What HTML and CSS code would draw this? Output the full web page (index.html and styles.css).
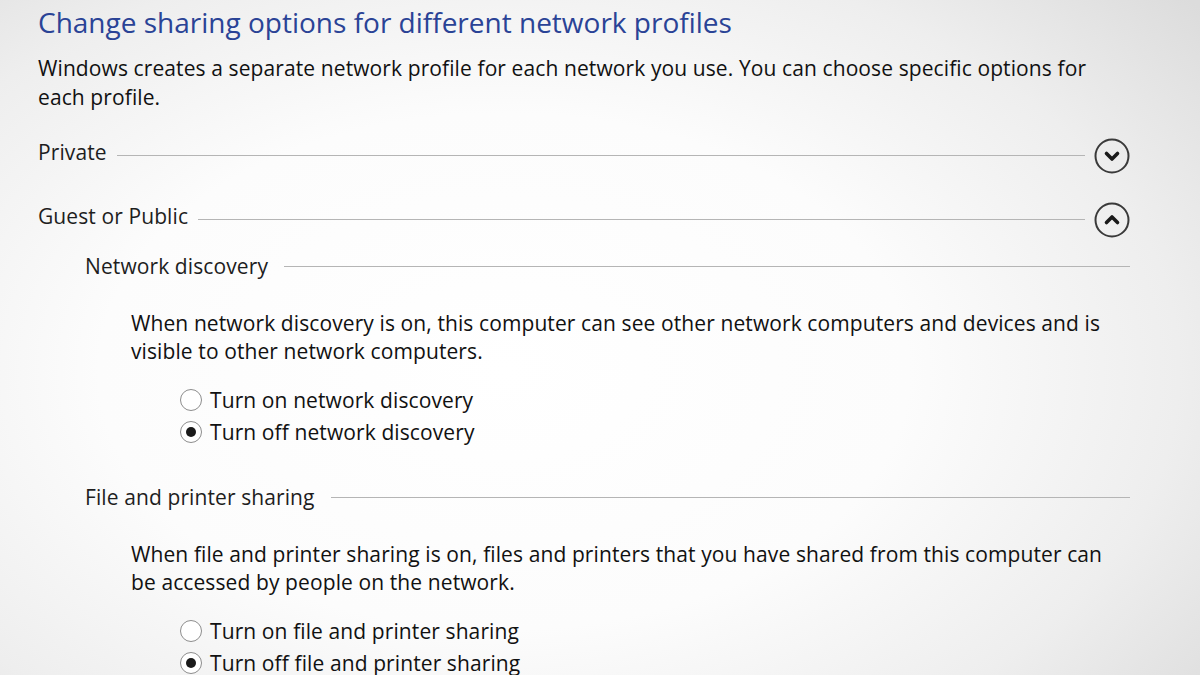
FILE: index.html
```
<!DOCTYPE html>
<html>
<head>
<meta charset="utf-8">
<link rel="stylesheet" href="styles.css">
</head>
<body>
<div class="page">
  <h1 class="title">Change sharing options for different network profiles</h1>
  <p class="intro">Windows creates a separate network profile for each network you use. You can choose specific options for each profile.</p>

  <div class="profile first">
    <span class="plabel">Private</span>
    <span class="rule"></span>
    <span class="toggle"><svg viewBox="0 0 36 36" width="36" height="36"><circle cx="18" cy="18" r="16.5" fill="none" stroke="#3a3a3a" stroke-width="2"/><path d="M12.5 15.5 L18 21 L23.5 15.5" fill="none" stroke="#1a1a1a" stroke-width="3.6" stroke-linecap="round" stroke-linejoin="round"/></svg></span>
  </div>

  <div class="profile">
    <span class="plabel">Guest or Public</span>
    <span class="rule"></span>
    <span class="toggle"><svg viewBox="0 0 36 36" width="36" height="36"><circle cx="18" cy="18" r="16.5" fill="none" stroke="#3a3a3a" stroke-width="2"/><path d="M12.5 20.5 L18 15 L23.5 20.5" fill="none" stroke="#1a1a1a" stroke-width="3.6" stroke-linecap="round" stroke-linejoin="round"/></svg></span>
  </div>

  <div class="section first-section">
    <div class="shead">
      <span class="slabel">Network discovery</span>
      <span class="rule"></span>
    </div>
    <p class="desc">When network discovery is on, this computer can see other network computers and devices and is visible to other network computers.</p>
    <div class="radios">
      <div class="radio"><span class="rb"></span><span>Turn on network discovery</span></div>
      <div class="radio"><span class="rb on"></span><span>Turn off network discovery</span></div>
    </div>
  </div>

  <div class="section second-section">
    <div class="shead">
      <span class="slabel">File and printer sharing</span>
      <span class="rule"></span>
    </div>
    <p class="desc">When file and printer sharing is on, files and printers that you have shared from this computer can be accessed by people on the network.</p>
    <div class="radios">
      <div class="radio"><span class="rb"></span><span>Turn on file and printer sharing</span></div>
      <div class="radio"><span class="rb on"></span><span>Turn off file and printer sharing</span></div>
    </div>
  </div>
</div>
</body>
</html>
```
FILE: styles.css
```
html, body {
  margin: 0;
  padding: 0;
  height: 675px;
  overflow: hidden;
}
body {
  background: radial-gradient(ellipse 75% 85% at 42% 55%, #ffffff 0%, #fcfcfc 45%, #eeeeee 75%, #dcdcdc 100%);
  font-family: "Open Sans", "Noto Sans", sans-serif;
  color: #111;
}
.page {
  padding: 0 70px 0 38px;
}
.title {
  margin: 0;
  padding-top: 2px;
  font-weight: normal;
  font-size: 28px;
  line-height: 40px;
  color: #2a4396;
}
.intro {
  margin: 12px 0 0 0;
  font-size: 21px;
  line-height: 29px;
  width: 1070px;
  letter-spacing: 0.1px;
}
.profile {
  display: flex;
  align-items: center;
  height: 40px;
  width: 1092px;
  margin-top: 24px;
}
.profile.first {
  margin-top: 22px;
}
.plabel {
  font-size: 21px;
  color: #1e1e1e;
  letter-spacing: 0.1px;
  margin-right: 10px;
  margin-top: -4px;
}
.rule {
  flex: 1;
  height: 0;
  border-top: 1px solid #b5b5b5;
  margin-top: 2px;
}
.toggle {
  display: flex;
  margin-left: 9px;
  margin-top: 3px;
}
.section {
  padding-left: 47px;
  width: 1045px;
}
.first-section { margin-top: 12px; }
.second-section { margin-top: 33px; }
.shead {
  display: flex;
  align-items: center;
  height: 32px;
}
.slabel {
  font-size: 21px;
  color: #1e1e1e;
  letter-spacing: 0.1px;
  margin-right: 16px;
}
.shead .rule { margin-top: 0; }
.desc {
  margin: 27px 0 0 46px;
  font-size: 21px;
  line-height: 28px;
  letter-spacing: 0.1px;
  width: 985px;
}
.radios {
  margin: 19px 0 0 95px;
}
.radio {
  display: flex;
  align-items: center;
  height: 32px;
  font-size: 21px;
  letter-spacing: 0.1px;
}
.rb {
  box-sizing: border-box;
  width: 22px;
  height: 22px;
  border-radius: 50%;
  border: 1.5px solid #8d8d8d;
  background: #fff;
  margin-right: 8px;
  display: flex;
  align-items: center;
  justify-content: center;
}
.rb.on::after {
  content: "";
  width: 10px;
  height: 10px;
  border-radius: 50%;
  background: #1a1a1a;
}
```
